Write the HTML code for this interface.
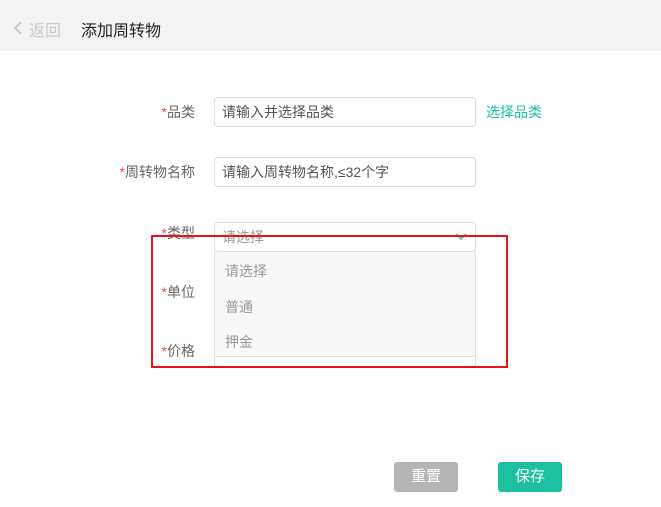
<!DOCTYPE html>
<html><head><meta charset="utf-8"><style>
*{margin:0;padding:0;box-sizing:border-box}
body{width:661px;height:507px;background:#fff;font-family:"Liberation Sans","Noto Sans CJK SC",sans-serif;position:relative;overflow:hidden}
.hd{position:absolute;left:0;top:0;width:661px;height:51px;background:#f3f3f3}
.ab{position:absolute}
.lbl{position:absolute;font-size:14px;color:#666;text-align:right;width:120px}
.lbl i{color:#f04a4a;font-style:normal}
.inp{position:absolute;left:214px;width:262px;height:30px;border:1px solid #ddd;border-radius:4px;font-size:14px;padding-left:7px;line-height:28px;color:#555}
.btn{position:absolute;top:462px;width:64px;height:30px;border-radius:3px;color:#fff;font-size:15px;text-align:center;line-height:30px}
</style></head><body>
<div class="hd"></div>
<svg class="ab" style="left:13px;top:20px" width="10" height="16"><path d="M8 2 L2 8 L8 14" stroke="#c8c8c8" stroke-width="2" fill="none"/></svg>
<div class="ab" style="left:29px;top:17px;font-size:16px;color:#c8c8c8">返回</div>
<div class="ab" style="left:81px;top:17px;font-size:16px;color:#222">添加周转物</div>

<div class="lbl" style="left:75px;top:102px"><i>*</i>品类</div>
<div class="inp" style="top:97px">请输入并选择品类</div>
<div class="ab" style="left:486px;top:102px;font-size:14px;color:#1cc09f">选择品类</div>

<div class="lbl" style="left:75px;top:162px"><i>*</i>周转物名称</div>
<div class="inp" style="top:157px">请输入周转物名称,≤32个字</div>

<div class="lbl" style="left:75px;top:223px"><i>*</i>类型</div>
<div class="inp" style="top:222px;color:#999">请选择</div>
<svg class="ab" style="left:455px;top:233px" width="12" height="8"><path d="M1 1 L6 6 L11 1" stroke="#1cc09f" stroke-width="1.5" fill="none"/></svg>

<div class="lbl" style="left:75px;top:282px"><i>*</i>单位</div>
<div class="lbl" style="left:75px;top:341px"><i>*</i>价格</div>
<div class="inp" style="top:338px;height:30px"></div>

<div class="ab" style="left:214px;top:251px;width:262px;height:106px;background:#f8f8f8;border:1px solid #e2e2e2;font-size:14px;color:#999">
<div style="position:absolute;left:10px;top:9px">请选择</div>
<div style="position:absolute;left:10px;top:45px">普通</div>
<div style="position:absolute;left:10px;top:80px">押金</div>
</div>

<div class="ab" style="left:151px;top:235px;width:357px;height:133px;border:2px solid #e8141c"></div>

<div class="btn" style="left:394px;background:#b5b5b5">重置</div>
<div class="btn" style="left:498px;background:#1cc09f">保存</div>
</body></html>
